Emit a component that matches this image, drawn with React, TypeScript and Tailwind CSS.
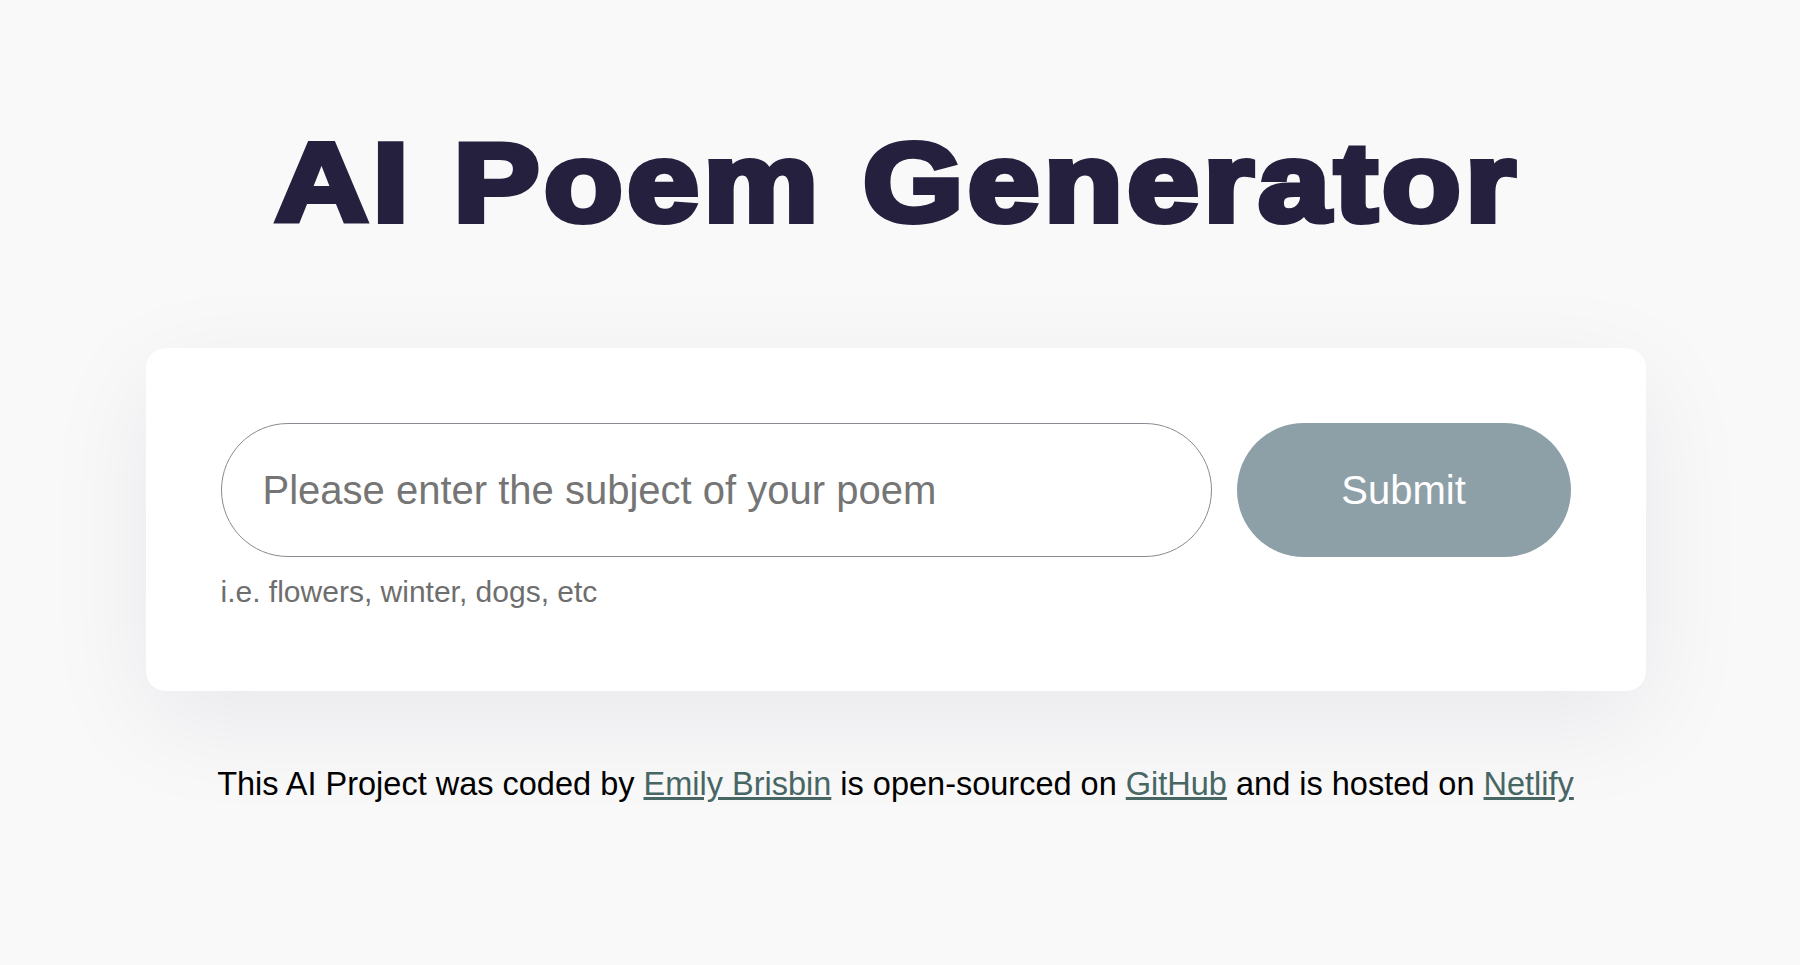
import React, { useState } from 'react';

export default function App() {
  const [subject, setSubject] = useState('');

  return (
    <div className="min-h-screen bg-[#f9f9fa] font-['Liberation_Sans',Arial,sans-serif] flex flex-col items-center pr-[9px]">
      <h1 className="mt-[127px] pl-[4px] text-[112px] leading-none font-bold tracking-[4px] text-[#26203f] [-webkit-text-stroke:6px_#26203f] scale-x-[1.15] text-center whitespace-nowrap">
        AI Poem Generator
      </h1>

      <div className="mt-[109px] w-[1500px] bg-white rounded-[20px] px-[75px] pt-[75px] pb-[82px] shadow-[0_30px_110px_rgba(20,20,40,0.07)]">
        <form className="flex gap-[25px]" onSubmit={(e) => e.preventDefault()}>
          <input
            type="text"
            value={subject}
            onChange={(e) => setSubject(e.target.value)}
            placeholder="Please enter the subject of your poem"
            className="w-[991px] h-[134px] rounded-full border border-[#8b8a92] px-[41px] text-[40px] text-[#222] placeholder:text-[#757575] outline-none"
          />
          <button
            type="submit"
            className="w-[334px] h-[134px] rounded-full bg-[#8ea0a7] text-white text-[40px]"
          >
            Submit
          </button>
        </form>
        <p className="mt-[18px] text-[30px] leading-[34px] text-[#6e6e6e]">i.e. flowers, winter, dogs, etc</p>
      </div>

      <footer className="mt-[75px] text-[32.5px] leading-[37px] text-black">
        This AI Project was coded by{' '}
        <a href="#" className="underline text-[#476664]">Emily Brisbin</a> is open-sourced on{' '}
        <a href="#" className="underline text-[#476664]">GitHub</a> and is hosted on{' '}
        <a href="#" className="underline text-[#476664]">Netlify</a>
      </footer>
    </div>
  );
}
